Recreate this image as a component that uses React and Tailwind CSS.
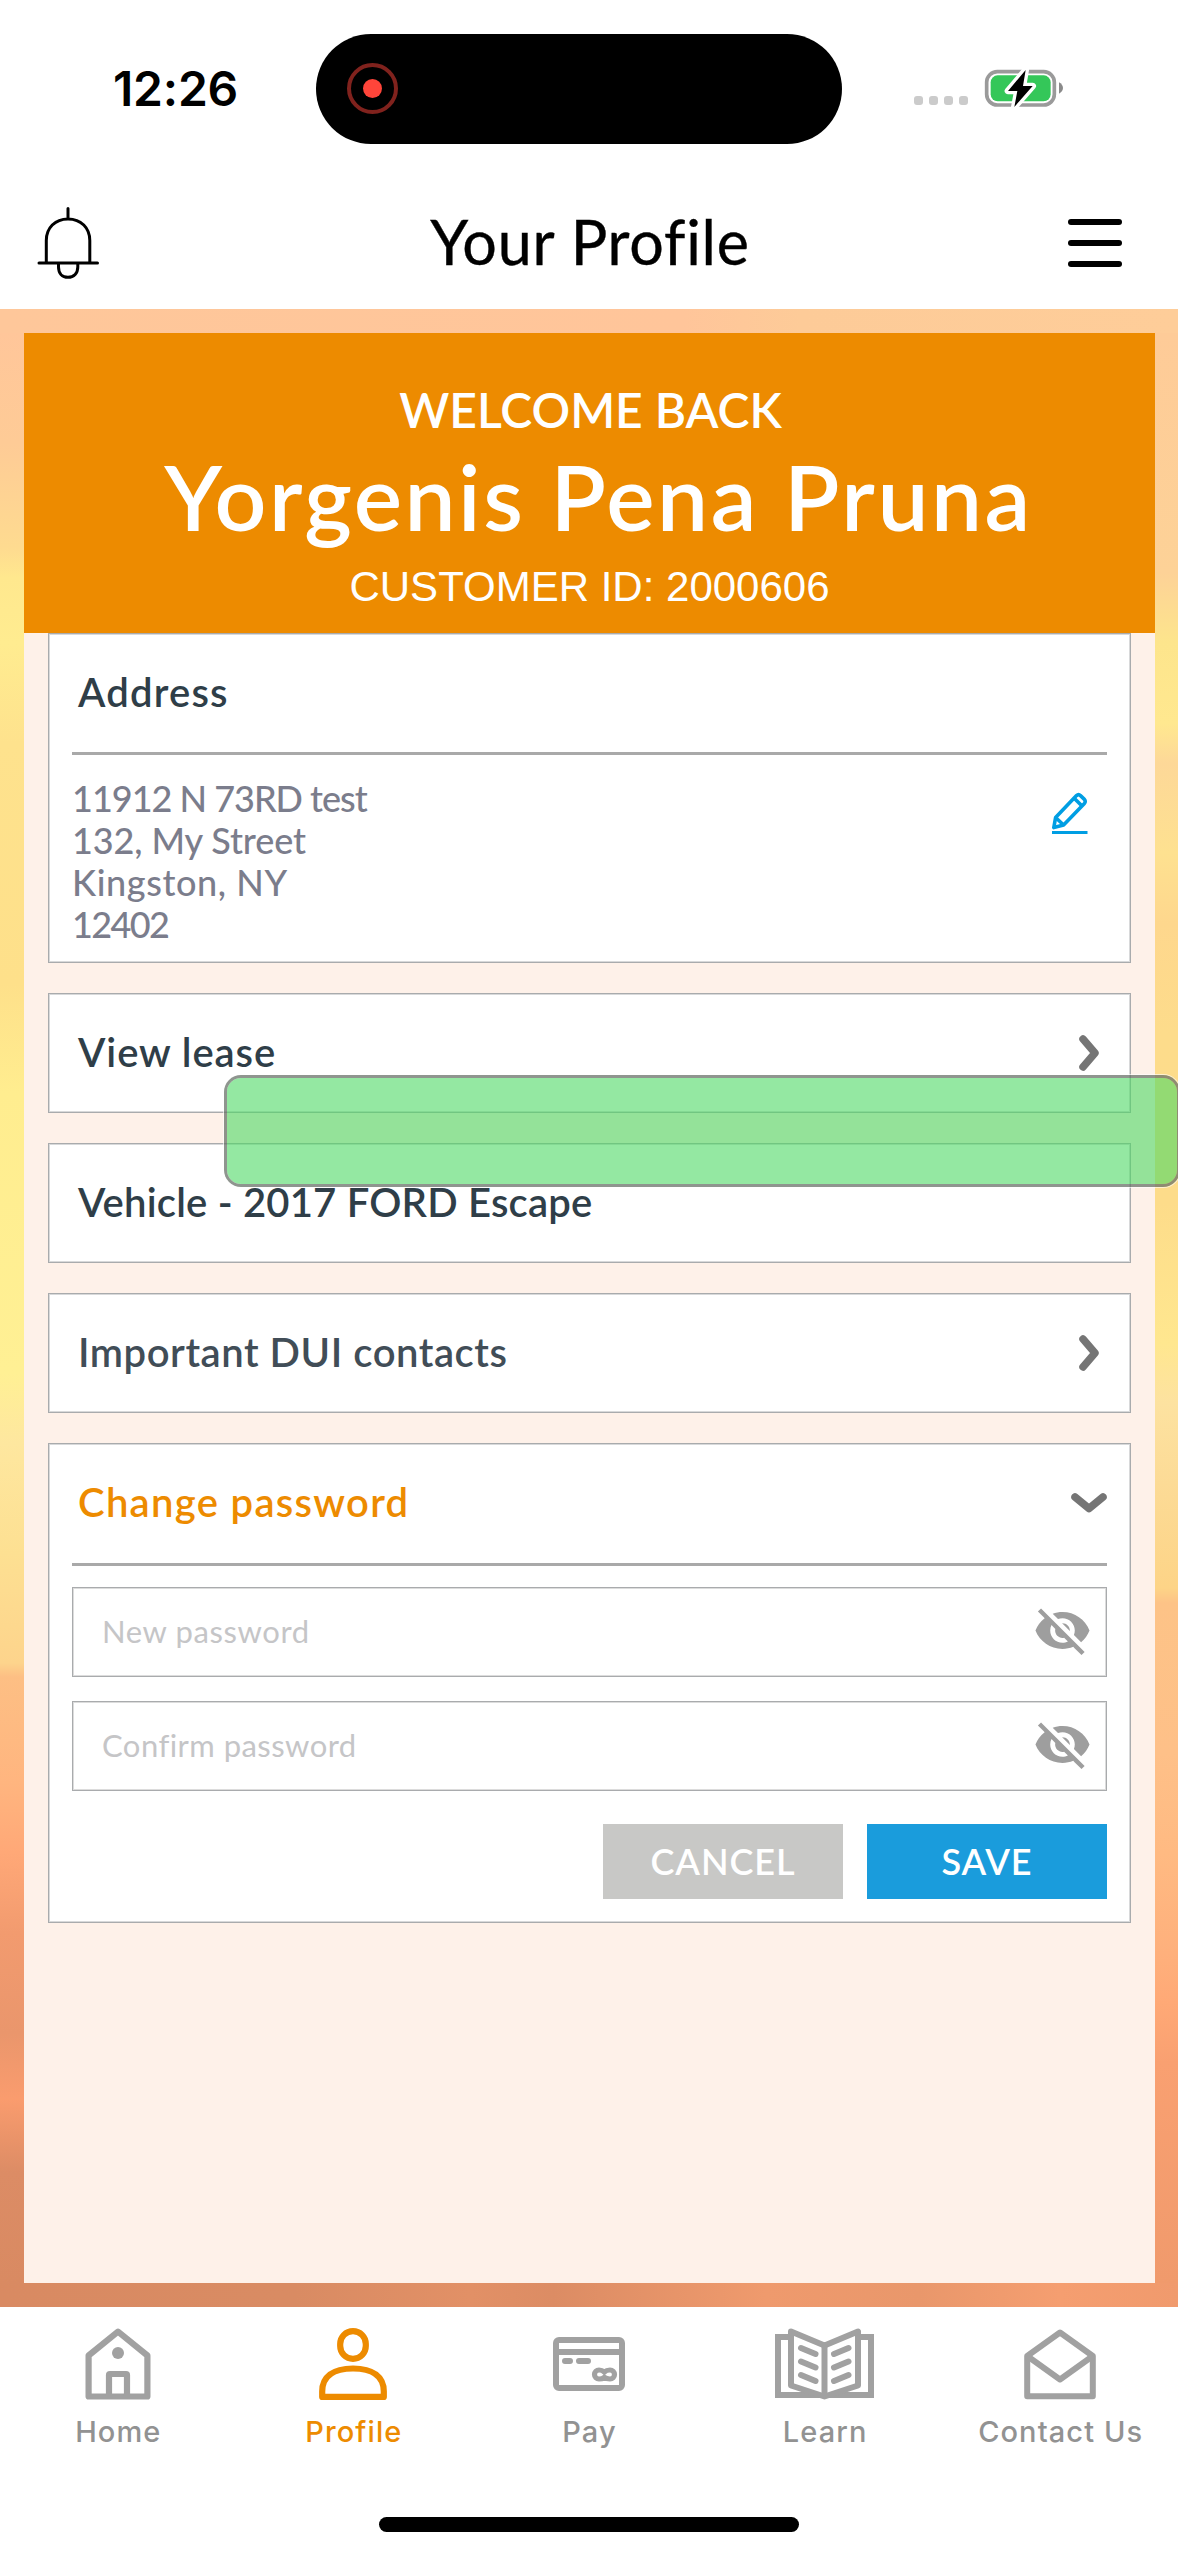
import { MdVisibilityOff } from "react-icons/md";

function StatusBar() {
  return (
    <div className="grid h-[177px] grid-cols-[316px_526px_1fr] items-center">
      <div className="pl-[113px] font-[Inter] text-[48px] leading-[60px] font-semibold tracking-[-0.2px] text-black">
        12:26
      </div>
      <div className="flex h-[110px] items-center rounded-full bg-black pl-[31px]">
        <div className="flex size-[51px] items-center justify-center rounded-full border-[4.5px] border-[#80221d]">
          <div className="size-[19px] rounded-full bg-[#ff453a]" />
        </div>
      </div>
      <div className="flex items-center gap-[12px] pl-[72px]">
        <div className="flex gap-[6px] pt-[24px]">
          {[0, 1, 2, 3].map((i) => (
            <div key={i} className="size-[9px] rounded-[3px] bg-[#cbcbcb]" />
          ))}
        </div>
        <svg className="h-[55px] w-[90px]" viewBox="0 0 270 165">
          <rect x="20" y="32" width="203" height="100" rx="32" fill="none" stroke="#9a9a9a" strokeWidth="11" />
          <rect x="32" y="43" width="180" height="78" rx="21" fill="#34c759" />
          <path d="M237 64c7 4 12 10 12 17s-5 13-12 17z" fill="#8a8a8a" />
          <path
            d="M137 27L84 90H112L103 138L158 75H129Z"
            fill="#000"
            stroke="#fff"
            strokeWidth="20"
            strokeLinejoin="round"
            paintOrder="stroke"
          />
        </svg>
      </div>
    </div>
  );
}

function TitleBar() {
  return (
    <div className="grid h-[132px] grid-cols-[1fr_auto_1fr] items-center">
      <svg className="ml-[37px] h-[74px] w-[62px]" viewBox="37 206 62 74" fill="none" stroke="#000" strokeWidth="3" strokeLinecap="round">
        <path d="M68 208.500V218.500M46.300 262V240.500C46.300 228 55 219 68 219S89.800 228 89.800 240.500V262" />
        <path d="M39 263H97.500" />
        <path d="M58.500 264V267C58.500 273 62 277.300 68 277.300S77.800 273 77.800 267V264" />
      </svg>
      <h1 className="pb-[3px] pl-[2px] text-[61px] leading-[72px] font-normal tracking-[0.8px] text-black [-webkit-text-stroke:0.4px_black]">
        Your Profile
      </h1>
      <div className="mr-[56px] flex w-[54px] flex-col gap-[15px] justify-self-end">
        <div className="h-[6px] rounded-full bg-black" />
        <div className="h-[6px] rounded-full bg-black" />
        <div className="h-[6px] rounded-full bg-black" />
      </div>
    </div>
  );
}

function Welcome() {
  return (
    <div className="flex h-[300px] flex-col items-center bg-[#ed8b00] pt-[47px] text-white">
      <div className="pl-[2px] text-[48px] leading-[60px] font-semibold">WELCOME BACK</div>
      <div className="mt-[6px] pl-[18px] text-[91px] leading-[100px] font-semibold tracking-[2.5px] whitespace-nowrap">
        Yorgenis Pena Pruna
      </div>
      <div className="mt-[16px] font-['Liberation_Sans'] text-[42px] leading-[50px]">CUSTOMER ID: 2000606</div>
    </div>
  );
}

function Card({ className = "", children }) {
  return (
    <section className={`border border-[#a9abad] bg-white shadow-[inset_0_0_0_1px_#d8d9da] ${className}`}>
      {children}
    </section>
  );
}

function RowHead({ title, tone, icon }) {
  return (
    <div className="flex h-[118px] items-center justify-between pl-[29px]">
      <h2 className={`pb-[3px] text-[40px] leading-[48px] font-semibold whitespace-nowrap ${tone}`}>{title}</h2>
      {icon}
    </div>
  );
}

function ChevronRight() {
  return (
    <svg className="mr-[31px] h-[36px] w-[20px]" viewBox="0 0 20 36" fill="none" stroke="#757575" strokeWidth="7.500" strokeLinecap="round" strokeLinejoin="round">
      <path d="M4 4L16 18L4 32" />
    </svg>
  );
}

function ChevronDown() {
  return (
    <svg className="mr-[23px] h-[20px] w-[36px]" viewBox="0 0 36 20" fill="none" stroke="#757575" strokeWidth="7.500" strokeLinecap="round" strokeLinejoin="round">
      <path d="M4 4L18 15.500L32 4" />
    </svg>
  );
}

function PencilIcon() {
  return (
    <svg className="mt-[37px] mr-[18px] h-[44px] w-[38px]" viewBox="0 0 38 44" fill="none" stroke="#009ee3" strokeWidth="3.600" strokeLinejoin="round">
      <path d="M2.800 35.600L4.600 25.500L25.500 3.600Q27.500 1.700 29.500 3.600L33.400 7.400Q35 9.400 33.400 11.400L12.600 33Z" />
      <path d="M23.200 6.200L30.800 13.800M4.600 25.500L12.600 33" />
      <path d="M1 40.500H36.500" strokeWidth="3.200" />
    </svg>
  );
}

function PasswordField({ label, spacing }) {
  return (
    <div className="flex h-[90px] items-center justify-between border border-[#a9abad] pr-[14px] pb-[3px] pl-[29px] shadow-[inset_0_0_0_1px_#dcdcdc]">
      <span className={`text-[31px] leading-[40px] text-[#c5c5c7] ${spacing}`}>{label}</span>
      <MdVisibilityOff className="size-[59px] text-[#9e9e9e]" />
    </div>
  );
}

function Content() {
  return (
    <div className="flex flex-1 flex-col bg-[#fef1e9]">
      <Welcome />
      <div className="flex flex-col gap-[30px] px-[24px]">
        <Card className="h-[330px]">
          <RowHead title="Address" tone="text-[#2f3e48] tracking-[1.2px]" />
          <div className="mx-[23px] h-[3px] bg-[#a9a9a9]" />
          <div className="mx-[23px] flex items-start justify-between">
            <address className="pt-[22px] text-[36px] leading-[42px] font-medium text-[#7b7d8c] not-italic">
              <div className="tracking-[-1px]">11912 N 73RD test</div>
              <div className="tracking-[-0.1px]">132, My Street</div>
              <div className="tracking-[0.6px]">Kingston, NY</div>
              <div className="tracking-[-1.6px]">12402</div>
            </address>
            <PencilIcon />
          </div>
        </Card>
        <Card className="h-[120px]">
          <RowHead title="View lease" tone="text-[#2f3e48] tracking-[0.9px]" icon={<ChevronRight />} />
        </Card>
        <Card className="h-[120px]">
          <RowHead title="Vehicle - 2017 FORD Escape" tone="text-[#2f3e48] tracking-[0.2px]" />
        </Card>
        <Card className="h-[120px]">
          <RowHead title="Important DUI contacts" tone="text-[#414d57] tracking-[0.55px]" icon={<ChevronRight />} />
        </Card>
        <Card className="h-[480px]">
          <RowHead title="Change password" tone="text-[#ed8b00] tracking-[1.3px]" icon={<ChevronDown />} />
          <div className="mx-[23px] mt-px h-[3px] bg-[#a9a9a9]" />
          <div className="mx-[23px] mt-[21px] flex flex-col gap-[24px]">
            <PasswordField label="New password" spacing="tracking-[0.6px]" />
            <PasswordField label="Confirm password" spacing="tracking-[0.45px]" />
          </div>
          <div className="mx-[23px] mt-[33px] flex justify-end gap-[24px] text-[36px] font-semibold tracking-[0.9px] text-white">
            <button className="h-[75px] w-[240px] bg-[#c8c8c6] pb-[2px]">CANCEL</button>
            <button className="h-[75px] w-[240px] bg-[#1a9cdc] pb-[2px]">SAVE</button>
          </div>
        </Card>
      </div>
    </div>
  );
}

const icons = {
  Home: (
    <svg className="h-[72px] w-[66px]" viewBox="0 0 66 72" fill="none" stroke="currentColor" strokeWidth="6.200" strokeLinejoin="round">
      <path d="M33 3.600L3.600 27.500V68.500H62.400V27.500Z" />
      <path d="M24 68V47Q24 46 25 46H41Q42 46 42 47V68" />
      <circle cx="33" cy="25" r="6" fill="currentColor" stroke="none" />
    </svg>
  ),
  Profile: (
    <svg className="h-[72px] w-[68px]" viewBox="0 0 68 72" fill="none" stroke="currentColor" strokeWidth="6.200" strokeLinejoin="round">
      <rect x="21.200" y="3.100" width="25.600" height="27.800" rx="12.800" />
      <path d="M3.200 68.900V63.500C3.200 49 14 40.500 34 40.500S64.800 49 64.800 63.500V68.900Z" />
    </svg>
  ),
  Pay: (
    <svg className="h-[72px] w-[72px]" viewBox="0 0 72 72" fill="none" stroke="currentColor" strokeWidth="6">
      <rect x="3" y="12" width="66" height="48" rx="3" />
      <path d="M3 24H69" />
      <path d="M12 33H17M26 33H35" strokeLinecap="round" />
      <path d="M51.300 44Q53.500 42 57 42A4.500 4.500 0 0 1 57 51Q53.500 51 51.300 49.300Q49 51 46 51A4.500 4.500 0 0 1 46 42Q49 42 51.300 44Z" strokeWidth="5.200" />
    </svg>
  ),
  Learn: (
    <svg className="h-[72px] w-[99px]" viewBox="0 0 99 72" fill="none" stroke="currentColor" strokeWidth="6" strokeLinejoin="round">
      <path d="M16 9H3V67H96V9H83" strokeLinejoin="miter" />
      <path d="M16 3.500L49.500 17.500L83 3.500V57.500L49.500 68.500L16 57.500Z" fill="#fff" />
      <path d="M49.500 17.500V68" />
      <path d="M26 20L40.500 26M26 33.500L40.500 39.500M26 47L40.500 53M73.500 20L59 26M73.500 33.500L59 39.500M73.500 47L59 53" strokeLinecap="round" />
    </svg>
  ),
  "Contact Us": (
    <svg className="h-[72px] w-[72px]" viewBox="0 0 72 72" fill="none" stroke="currentColor" strokeWidth="6" strokeLinejoin="round">
      <path d="M36 4.500L3.200 28V68.200H68.800V28Z" />
      <path d="M3.200 28L36 51.500L68.800 28" />
    </svg>
  ),
};

function TabBar() {
  return (
    <nav className="flex h-[249px] flex-col items-center justify-between bg-white pt-[21px] pb-[24px]">
      <div className="grid w-full grid-cols-5">
        {Object.entries(icons).map(([name, icon]) => (
          <div key={name} className={`flex flex-col items-center ${name === "Profile" ? "text-[#ed8b00]" : "text-[#a1a1a1]"}`}>
            {icon}
            <span className={`mt-[14px] pl-px font-[Inter] text-[29px] leading-[36px] font-medium tracking-[1.1px] ${name === "Profile" ? "" : "text-[#929292]"}`}>
              {name}
            </span>
          </div>
        ))}
      </div>
      <div className="h-[15px] w-[420px] rounded-full bg-black" />
    </nav>
  );
}

export default function App() {
  return (
    <div className="relative flex h-[2556px] w-[1178px] flex-col overflow-hidden bg-white font-[Lato,sans-serif]">
      <header className="h-[309px]">
        <StatusBar />
        <TitleBar />
      </header>
      <main className="flex h-[1998px] flex-col">
        <div className="h-[24px] bg-[linear-gradient(90deg,#fec79a_0%,#ffc59a_58%,#fdcb98_68%,#fecd99_100%)]" />
        <div className="flex h-[1950px]">
          <div className="w-[24px] bg-[linear-gradient(180deg,#ffc69a_0px,#fecb96_110px,#fedb90_215px,#ffe88e_245px,#ffec90_310px,#fee28d_410px,#fee08a_650px,#ffed8f_760px,#fff094_1040px,#fee79f_1110px,#fde092_1220px,#fdd48c_1330px,#fdbf84_1344px,#ffb57f_1450px,#ffa877_1520px,#f29b6f_1600px,#ea966c_1700px,#fa9c6e_1766px,#dc8c65_1840px,#d98a62_1950px)]" />
          <Content />
          <div className="w-[23px] bg-[linear-gradient(180deg,#fecb98_0px,#fdd297_240px,#fde58c_310px,#ffe88f_390px,#fdd898_430px,#fee190_520px,#fed78d_590px,#fddc8b_700px,#fddc8a_870px,#ffe78f_1010px,#fde2a0_1070px,#fcdb96_1150px,#fdd487_1255px,#fdc387_1270px,#fec088_1420px,#ffba82_1520px,#feb07c_1620px,#ffa976_1670px,#f9a071_1730px,#f09a6c_1950px)]" />
        </div>
        <div className="h-[24px] bg-[linear-gradient(90deg,#d98a62_0%,#d98b63_25%,#e29066_40%,#dc8c64_47%,#ef9a6d_65%,#e9976b_78%,#f59e70_90%,#f09a6d_100%)]" />
      </main>
      <TabBar />
      <div className="absolute top-[1075px] left-[224px] h-[112px] w-[956px] rounded-[17px] border-[3px] border-[#6a716a]/75 bg-[#4cd964]/60 bg-clip-padding shadow-[0_0_0_1px_rgba(255,255,255,0.6)]" />
    </div>
  );
}
